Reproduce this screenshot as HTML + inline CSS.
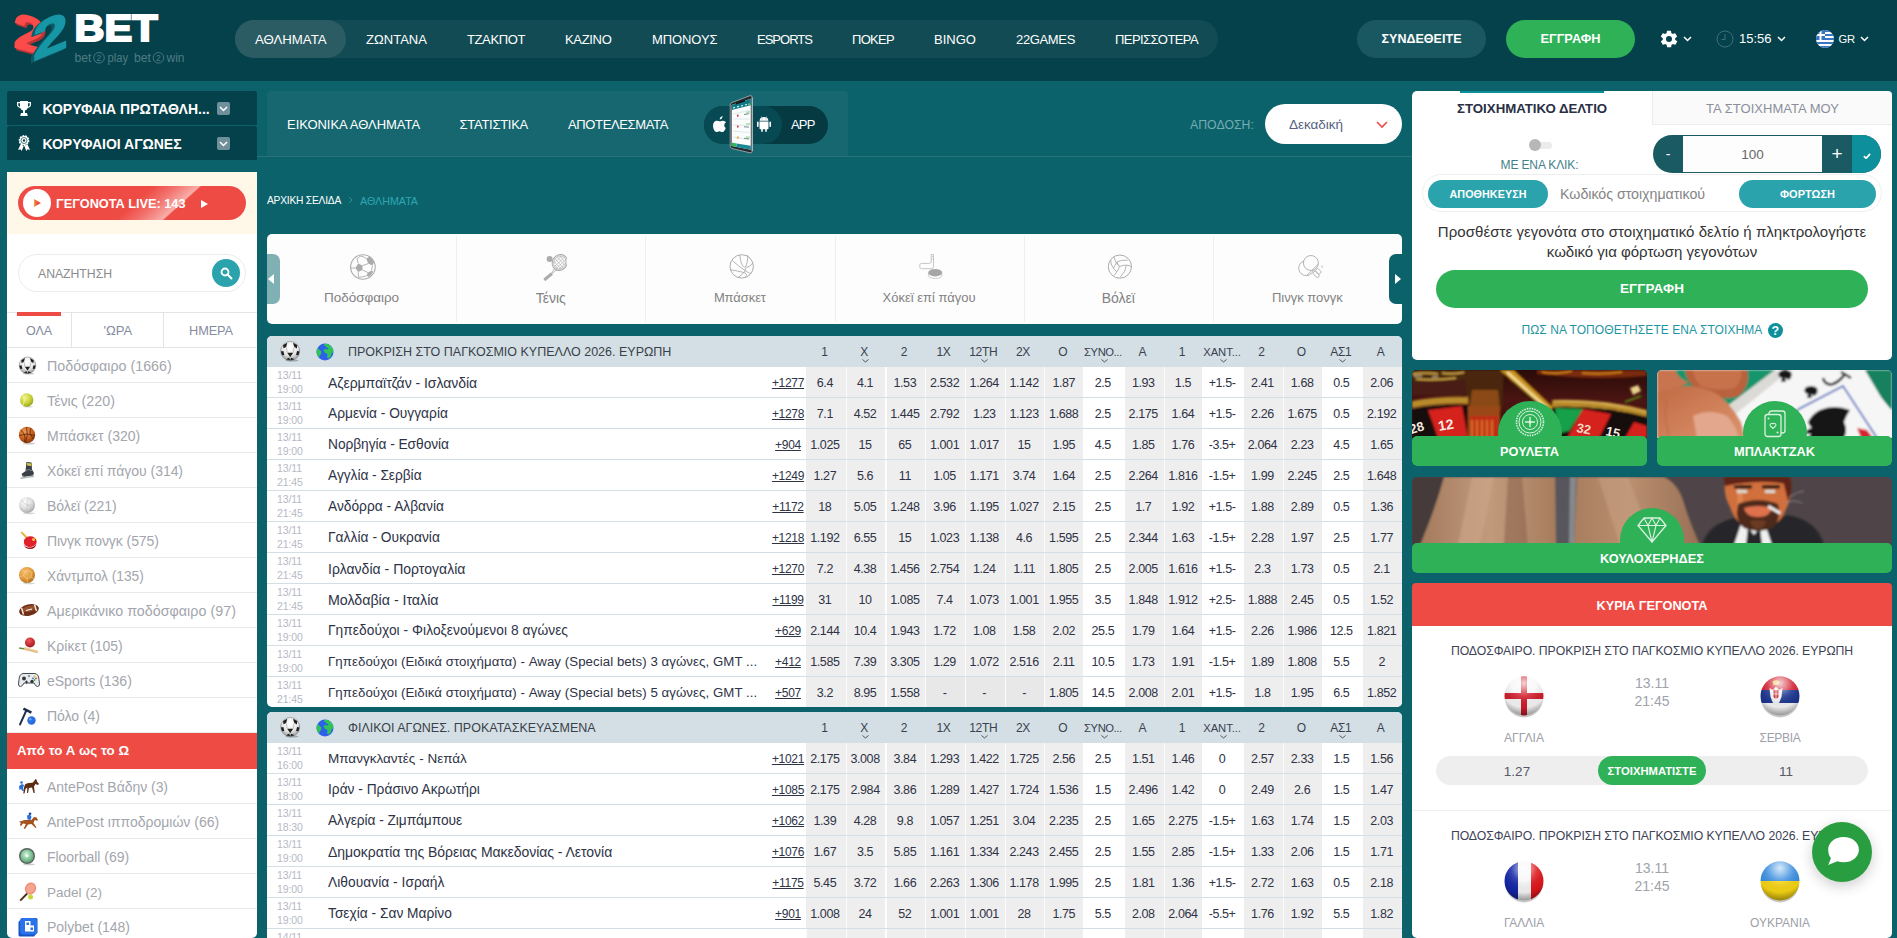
<!DOCTYPE html>
<html lang="el"><head><meta charset="utf-8"><title>22BET</title>
<style>
*{box-sizing:border-box;margin:0;padding:0}
html,body{width:1897px;height:938px;overflow:hidden}
body{background:#0b626a;position:relative;font-family:"Liberation Sans",sans-serif;color:#333;font-size:14px}
.abs{position:absolute}
svg{display:block}
/* header */
#hdr{position:absolute;left:0;top:0;width:1897px;height:81px;background:#05414b}
#nav{position:absolute;left:235px;top:20px;width:983px;height:38px;border-radius:19px;background:#124b54}
#nav .act{position:absolute;left:0;top:0;width:111px;height:38px;border-radius:19px;background:#2b5c63}
#nav span{position:absolute;top:1px;line-height:38px;color:#fff;font-size:14px;white-space:nowrap}
.hbtn{position:absolute;top:20px;width:129px;height:38px;border-radius:19px;color:#fff;font-weight:bold;font-size:13px;text-align:center;line-height:38px}
.htx{position:absolute;color:#fff;font-size:14px;line-height:20px;top:29px;white-space:nowrap}
/* left top blocks */
.ltb{position:absolute;left:7px;width:250px;height:34px;background:#05414b;color:#fff;font-weight:bold;font-size:14px;line-height:34px;white-space:nowrap}
.ltb b{position:absolute;left:35.500px;top:1px}
.ltb i{position:absolute;left:210px;top:11px;width:13px;height:13px;border-radius:2px;background:#6f909b}
/* subnav */
#subnav{position:absolute;left:267px;top:91px;width:581px;height:65px;background:#16676f;border-radius:4px 4px 0 0}
#subnav span{position:absolute;top:24px;line-height:20px;color:#fff;font-size:14px;white-space:nowrap}

#sb{position:absolute;left:7px;top:172px;width:250px;height:766px;background:#fff;overflow:hidden;border-radius:0 0 5px 5px}
.sbi{position:absolute;left:0;width:250px;height:35px;border-bottom:1px solid #eaeaea}
.sbi .ic{position:absolute;left:11px;top:8px;width:22px;height:20px}
.sbi span{position:absolute;left:40px;top:1px;line-height:35px;color:#a3a6ad;white-space:nowrap}

#car{position:absolute;left:267px;top:234px;width:1135px;height:90px;border-radius:5px;background:#fdfdfd;overflow:hidden}
.tbl{position:absolute;left:267px;width:1135px;background:#fff;border-radius:5px;overflow:hidden}
.th{position:absolute;left:0;top:0;width:1135px;height:31px;background:#d3dfe4}
.hc{position:absolute;top:1px;width:39.730px;padding-right:3px;text-align:center;line-height:30px;font-size:12px;color:#3a3f52;white-space:nowrap;letter-spacing:-0.300px}
.tr{position:absolute;left:0;width:1135px;height:31px;border-bottom:1px solid #d3dfe4}
.dt{position:absolute;left:10px;top:1px;font-size:10.500px;line-height:14px;color:#b6bac4;letter-spacing:-0.100px}
.nm{position:absolute;left:61px;top:1px;line-height:30px;color:#2e3346;white-space:nowrap}
.mr{position:absolute;left:496px;width:50px;text-align:center;top:1px;line-height:31px;font-size:12px;color:#2e3346;text-decoration:underline;letter-spacing:-0.300px}
.oc{position:absolute;top:0;width:39.730px;height:30px;background:#eeeeee;border-left:1px solid #fbfbfb;text-align:center;padding-right:2px;line-height:32px;font-size:12.500px;color:#2e3346;letter-spacing:-0.400px}
.oc.w{background:#fff;width:41.500px;border-left:0;z-index:2}
.oc.d{background:#e8e8e8}

#slip{position:absolute;left:1412px;top:91px;width:480px;height:269px;background:#fff;border-radius:5px}
.card{position:absolute;border-radius:5px;overflow:hidden}
.card .img{position:absolute;left:0;top:0;width:100%;height:68px;overflow:hidden}
.card .bar{position:absolute;left:0;bottom:0;width:100%;height:30px;background:#2eb157;border-radius:5px;text-align:center;line-height:30px;color:#fff;white-space:nowrap}
.card .bump{position:absolute;top:31px;width:64px;height:64px;border-radius:32px;background:#2eb157}
</style></head>
<body>
<div id="hdr"><svg class="abs" style="left:0;top:0" width="200" height="81" viewBox="0 0 200 81">
<g font-family="Liberation Sans, sans-serif" font-weight="bold">
<g transform="matrix(1.14 0.30 0 1 13.5 47)"><text x="0" y="0" font-size="50" fill="#b93434" stroke="#b93434" stroke-width="2" transform="translate(1.8,1.4)">2</text><text x="0" y="0" font-size="50" fill="#fb4b4b" stroke="#fb4b4b" stroke-width="1.6">2</text></g>
<g transform="matrix(1.20 -0.50 0 1 33 61)"><text x="0" y="0" font-size="52" fill="#0b5a66" stroke="#0b5a66" stroke-width="2" transform="translate(-2.4,0.8)">2</text><text x="0" y="0" font-size="52" fill="#1797a5" stroke="#1797a5" stroke-width="1.6">2</text></g>
<text x="74.500" y="40.800" font-size="36" fill="#fff" stroke="#fff" stroke-width="2" textLength="83" lengthAdjust="spacingAndGlyphs">BET</text>
</g>
<g font-family="Liberation Sans, sans-serif" font-size="12.5" fill="#4e7c83">
<text x="74.5" y="61.5" textLength="17" lengthAdjust="spacingAndGlyphs">bet</text><circle cx="99" cy="57.8" r="5.3" fill="none" stroke="#4e7c83" stroke-width="0.9"/><text x="96.6" y="61" font-size="8.5">2</text><text x="107.5" y="61.5" textLength="20.5" lengthAdjust="spacingAndGlyphs">play</text>
<text x="134" y="61.5" textLength="17" lengthAdjust="spacingAndGlyphs">bet</text><circle cx="158.5" cy="57.8" r="5.3" fill="none" stroke="#4e7c83" stroke-width="0.9"/><text x="156.1" y="61" font-size="8.5">2</text><text x="166.5" y="61.5" textLength="18" lengthAdjust="spacingAndGlyphs">win</text>
</g></svg>
<div id="nav">
<div class="act"></div><span style="left:20px;font-size:13.25px;font-weight:normal;letter-spacing:-0.05px;">ΑΘΛΗΜΑΤΑ</span><span style="left:131px;font-size:13px;font-weight:normal;letter-spacing:0.03px;">ΖΩΝΤΑΝΑ</span><span style="left:232px;font-size:13px;font-weight:normal;letter-spacing:-0.38px;">ΤΖΑΚΠΟΤ</span><span style="left:330px;font-size:13px;font-weight:normal;letter-spacing:-0.32px;">ΚΑΖΙΝΟ</span><span style="left:417px;font-size:13px;font-weight:normal;letter-spacing:-0.09px;">ΜΠΟΝΟΥΣ</span><span style="left:522px;font-size:13px;font-weight:normal;letter-spacing:-0.99px;">ESPORTS</span><span style="left:617px;font-size:13px;font-weight:normal;letter-spacing:-0.70px;">ΠΟΚΕΡ</span><span style="left:699px;font-size:13px;font-weight:normal;">BINGO</span><span style="left:781px;font-size:13px;font-weight:normal;letter-spacing:-0.35px;">22GAMES</span><span style="left:880px;font-size:13px;font-weight:normal;letter-spacing:-0.59px;">ΠΕΡΙΣΣΟΤΕΡΑ</span></div>
<div class="hbtn" style="left:1357px;background:#1a5861;font-size:12.5px;font-weight:bold;letter-spacing:0.03px;">ΣΥΝΔΕΘΕΙΤΕ</div>
<div class="hbtn" style="left:1506px;background:#2eb157;font-size:12.75px;font-weight:bold;">ΕΓΓΡΑΦΗ</div><svg class="abs" style="left:1658.5px;top:29px" width="20" height="20" viewBox="0 0 24 24"><path fill="#fff" d="M19.4 13a7.5 7.5 0 0 0 0-2l2.1-1.6a.5.5 0 0 0 .1-.7l-2-3.4a.5.5 0 0 0-.6-.2l-2.5 1a7.300 7.300 0 0 0-1.700-1l-.4-2.600A.5.5 0 0 0 14 2h-4a.5.5 0 0 0-.5.4l-.4 2.700a7.300 7.300 0 0 0-1.700 1l-2.500-1a.5.5 0 0 0-.6.2l-2 3.400a.5.5 0 0 0 .1.700L4.600 11a7.500 7.500 0 0 0 0 2l-2.100 1.600a.5.500 0 0 0-.1.700l2 3.400c.1.200.400.300.600.200l2.500-1c.500.400 1.100.700 1.700 1l.4 2.600c0 .300.200.500.500.500h4c.300 0 .500-.200.500-.400l.4-2.700c.600-.200 1.200-.600 1.700-1l2.500 1c.200.100.500 0 .600-.200l2-3.400a.500.500 0 0 0-.1-.700L19.400 13zM12 15.600a3.600 3.600 0 1 1 0-7.200 3.600 3.600 0 0 1 0 7.200z"/></svg><svg class="abs" style="left:1683px;top:36px" width="9" height="6" viewBox="0 0 9 6"><path d="M1 1l3.5 3.5L8 1" fill="none" stroke="#fff" stroke-width="1.5"/></svg><svg class="abs" style="left:1716px;top:30px" width="18" height="18" viewBox="0 0 18 18"><circle cx="9" cy="9" r="8" fill="none" stroke="#3f6f78" stroke-width="1"/><path d="M9 4v5.500h-3.500" fill="none" stroke="#3f6f78" stroke-width="1"/></svg><span class="htx" style="left:1739px;font-size:13px;font-weight:normal;">15:56</span><svg class="abs" style="left:1777px;top:36px" width="9" height="6" viewBox="0 0 9 6"><path d="M1 1l3.5 3.5L8 1" fill="none" stroke="#fff" stroke-width="1.5"/></svg><svg class="abs" style="left:1816px;top:30px" width="18" height="18" viewBox="0 0 18 18"><defs><clipPath id="cgr"><circle cx="9" cy="9" r="9"/></clipPath></defs><g clip-path="url(#cgr)"><rect width="18" height="18" fill="#fff"/><g fill="#3a75c4"><rect y="0" width="18" height="2"/><rect y="4" width="18" height="2"/><rect y="8" width="18" height="2"/><rect y="12" width="18" height="2"/><rect y="16" width="18" height="2"/><rect width="9" height="10"/></g><rect x="3.500" width="2" height="10" fill="#fff"/><rect y="4" width="9" height="2" fill="#fff"/></g></svg><span class="htx" style="left:1838.5px;font-size:11.25px;font-weight:normal;letter-spacing:-0.19px;">GR</span><svg class="abs" style="left:1860px;top:36px" width="9" height="6" viewBox="0 0 9 6"><path d="M1 1l3.5 3.5L8 1" fill="none" stroke="#fff" stroke-width="1.5"/></svg></div>
<div class="ltb" style="top:91px;border-radius:3px 3px 0 0"><svg class="abs" style="left:10px;top:10px" width="14" height="15" viewBox="0 0 14 15"><path fill="#fff" d="M3 0h8v1h3v2.500q0 3-3.300 3.400Q10 9 8 9.500V12h2l.8 3H3.200L4 12h2V9.500Q4 9 3.300 6.900Q0 6.500 0 3.500V1h3zM1.200 2.200v1.300q0 1.800 1.800 2.200V2.200zm11.600 0H11v3.500q1.800-.4 1.800-2.200z"/></svg><b style="font-size:14px;font-weight:bold;">ΚΟΡΥΦΑΙΑ ΠΡΩΤΑΘΛΗ...</b><i></i><svg class="abs" style="left:212px;top:15px" width="9" height="6" viewBox="0 0 9 6"><path d="M1 1l3.500 3.500L8 1" fill="none" stroke="#fff" stroke-width="1.500"/></svg></div>
<div class="ltb" style="top:126px;border-radius:3px 3px 0 0"><svg class="abs" style="left:10px;top:9px" width="14" height="16" viewBox="0 0 14 16"><circle cx="7" cy="5.500" r="4.600" fill="#fff" stroke="#fff" stroke-width="1.600" stroke-dasharray="1.700 1.100"/><circle cx="7" cy="5.500" r="3" fill="none" stroke="#05414b" stroke-width="0.700"/><circle cx="7" cy="5.500" r="1.200" fill="#05414b"/><path d="M3.500 9.500L1 15l2.500-.8L4.700 16l2-5zM10.500 9.500L13 15l-2.500-.8L9.300 16l-2-5z" fill="#fff"/></svg><b style="font-size:14px;font-weight:bold;letter-spacing:-0.02px;">ΚΟΡΥΦΑΙΟΙ ΑΓΩΝΕΣ</b><i></i><svg class="abs" style="left:212px;top:15px" width="9" height="6" viewBox="0 0 9 6"><path d="M1 1l3.500 3.500L8 1" fill="none" stroke="#fff" stroke-width="1.500"/></svg></div>
<div id="sb">
<div class="abs" style="left:0;top:0;width:250px;height:62px;background:#fff8e9"></div>
<div class="abs" style="left:11px;top:14px;width:228px;height:34px;border-radius:17px;background:linear-gradient(138deg,#ef4b45 0,#ef4b45 51%,#f2706b 59%,#f69a95 65.500%,#f9aeaa 68.300%,#ef4b45 69.200%,#ef4b45 100%);overflow:hidden">
<div class="abs" style="left:4.500px;top:3px;width:28px;height:28px;border-radius:14px;background:#fff"></div>
<svg class="abs" style="left:16px;top:13px" width="7" height="8" viewBox="0 0 7 8"><defs><linearGradient id="plg" x1="0" y1="0" x2="1" y2="0"><stop offset="0" stop-color="#f0a23a"/><stop offset="0.45" stop-color="#ef4b45"/></linearGradient></defs><path d="M0 0l7 4-7 4z" fill="url(#plg)"/></svg>
<span class="abs" style="left:38px;top:1px;line-height:34px;color:#fff;white-space:nowrap;font-size:12.75px;font-weight:bold;letter-spacing:-0.02px;">ΓΕΓΟΝΟΤΑ LIVE: 143</span>
<svg class="abs" style="left:183px;top:13.500px" width="7" height="8" viewBox="0 0 7 8"><path d="M0 0l7 4-7 4z" fill="#fff"/></svg></div>
<div class="abs" style="left:11px;top:82px;width:228px;height:38px;border-radius:19px;border:1px solid #ececec;background:#fff"></div>
<span class="abs" style="left:31px;top:92px;line-height:20px;color:#8b8b8b;font-size:12.25px;font-weight:normal;letter-spacing:-0.03px;">ΑΝΑΖΗΤΗΣΗ</span>
<div class="abs" style="left:205px;top:87px;width:28px;height:28px;border-radius:14px;background:#2ba3ad"></div>
<svg class="abs" style="left:213px;top:95px" width="13" height="13" viewBox="0 0 13 13"><circle cx="5" cy="5" r="3.500" fill="none" stroke="#fff" stroke-width="1.800"/><path d="M7.800 7.800l3.700 3.700" stroke="#fff" stroke-width="2" stroke-linecap="round"/></svg>
<div class="abs" style="left:0;top:140px;width:250px;height:36px;border-top:1px solid #e4e4e4;border-bottom:1px solid #e4e4e4"></div>
<div class="abs" style="left:10px;top:140px;width:44px;height:4px;background:#ef4b45"></div>
<div class="abs" style="left:64px;top:141px;width:1px;height:34px;background:#e4e4e4"></div>
<div class="abs" style="left:156px;top:141px;width:1px;height:34px;background:#e4e4e4"></div><span class="abs" style="left:19px;top:149px;line-height:20px;color:#858ca0;white-space:nowrap;font-size:12.5px;font-weight:normal;letter-spacing:-0.06px;">ΟΛΑ</span><span class="abs" style="left:96.5px;top:149px;line-height:20px;color:#858ca0;white-space:nowrap;font-size:13px;font-weight:normal;">'ΩΡΑ</span><span class="abs" style="left:182px;top:149px;line-height:20px;color:#858ca0;white-space:nowrap;font-size:12.75px;font-weight:normal;letter-spacing:-0.08px;">ΗΜΕΡΑ</span>
<div class="sbi" style="top:176px">
<div class="ic"><svg width="19" height="19" viewBox="0 0 19 19"><ellipse cx="10.500" cy="17.700" rx="6" ry="0.900" fill="#889" opacity="0.500"/><g><defs><radialGradient id="sb1" cx="48%" cy="30%" r="75%"><stop offset="0" stop-color="#fff"/><stop offset="0.55" stop-color="#e9e9e9"/><stop offset="1" stop-color="#8d8d8d"/></radialGradient></defs>
<circle cx="9.5" cy="9.3" r="8.3" fill="url(#sb1)" stroke="#6b6b6b" stroke-width="0.5"/><path d="M3.27 4.15 L7.01 2.00 L6.01 5.57 L3.69 7.23z M15.73 4.15 L11.99 2.00 L12.99 5.57 L15.31 7.23z M6.84 10.79 L12.16 10.79 L9.50 14.45z M1.37 9.71 L3.52 9.30 L4.35 12.79 L2.36 13.04z M17.63 9.71 L15.48 9.30 L14.65 12.79 L16.64 13.04z M5.76 16.60 L8.50 15.28 L9.50 17.43z M13.23 16.60 L10.50 15.28 L9.50 17.43z" fill="#1e1e1e"/>
<path d="M6.84 10.79L6.01 5.57M12.16 10.79L12.99 5.57M9.50 14.45L8.50 15.28M9.50 14.45L10.50 15.28" stroke="#777" stroke-width="0.4" fill="none"/></g></svg></div><span style="font-size:14.25px;font-weight:normal;">Ποδόσφαιρο (1666)</span></div>
<div class="sbi" style="top:211px">
<div class="ic"><svg width="18" height="18" viewBox="0 0 18 18"><defs><radialGradient id="tg" cx="38%" cy="32%" r="75%"><stop offset="0" stop-color="#f3f58a"/><stop offset="0.6" stop-color="#c3cf35"/><stop offset="1" stop-color="#8f9a1e"/></radialGradient></defs><ellipse cx="10" cy="15.800" rx="5" ry="0.800" fill="#998" opacity="0.400"/><circle cx="8.700" cy="9" r="6.700" fill="url(#tg)"/><path d="M4.500 4q3.500 4.500 0.500 10" fill="none" stroke="#f1f3b5" stroke-width="0.900"/></svg></div><span style="font-size:14.25px;font-weight:normal;">Τένις (220)</span></div>
<div class="sbi" style="top:246px">
<div class="ic"><svg width="19" height="19" viewBox="0 0 19 19"><defs><radialGradient id="bg" cx="40%" cy="30%" r="75%"><stop offset="0" stop-color="#f09a55"/><stop offset="0.6" stop-color="#c75e1c"/><stop offset="1" stop-color="#7a300a"/></radialGradient></defs><ellipse cx="11" cy="17.500" rx="6" ry="0.900" fill="#988" opacity="0.450"/><circle cx="9" cy="9" r="8.200" fill="url(#bg)"/><path d="M1 9.500q8-3 16 0M8.500 1q2 8-1 16M2.500 4q6 4 4 12M13 2q-3 6 3 11" fill="none" stroke="#4a1c06" stroke-width="0.700"/></svg></div><span style="font-size:14px;font-weight:normal;">Μπάσκετ (320)</span></div>
<div class="sbi" style="top:281px">
<div class="ic"><svg width="19" height="19" viewBox="0 0 19 19"><path d="M8.500 1l5 .5.5 7 2 3.500-1 2.500-10 1.500-1.500-3 4-3z" fill="#3a3f45"/><path d="M9 2l4 .4.200 2.600-4-.4z" fill="#d9c83a"/><path d="M7 10.500l3-2 4 1" fill="none" stroke="#8a929a" stroke-width="0.800"/><path d="M2.500 17.200l13.500-2" stroke="#aeb6bd" stroke-width="1.400"/><path d="M5.500 16v-1.500M14 14.800v-1.300" stroke="#777" stroke-width="1"/></svg></div><span style="font-size:14px;font-weight:normal;letter-spacing:-0.04px;">Χόκεϊ επί πάγου (314)</span></div>
<div class="sbi" style="top:316px">
<div class="ic"><svg width="19" height="19" viewBox="0 0 19 19"><defs><radialGradient id="vg" cx="40%" cy="32%" r="72%"><stop offset="0" stop-color="#fff"/><stop offset="0.55" stop-color="#dedede"/><stop offset="1" stop-color="#a3a3a3"/></radialGradient></defs><ellipse cx="11" cy="17.300" rx="6" ry="0.900" fill="#999" opacity="0.400"/><circle cx="9" cy="9" r="8" fill="url(#vg)"/><path d="M9 9q-1-4 2-7.500M9 9q4-1 8 1M9 9q1 4-2 7.500M3 4q3 3 6 5M15 13q-3-3-6-4" fill="none" stroke="#c4c4c4" stroke-width="0.600"/></svg></div><span style="font-size:14px;font-weight:normal;">Βόλεϊ (221)</span></div>
<div class="sbi" style="top:351px">
<div class="ic"><svg width="20" height="19" viewBox="0 0 20 19"><path d="M2.500 1.500l1.500-1 6 6-1.500 1.500z" fill="#e6b13a"/><path d="M6 9q3-5 8.500-3.500 5 2 4 6.500-2 4.500-8 4-5.500-1.500-4.500-7z" fill="#e2202a"/><path d="M6 11q-1 5 4.500 5.500 6 .500 8-4-1 6-7.500 5.500Q5 17 6 11z" fill="#9e1219"/><circle cx="15.500" cy="8.500" r="1.500" fill="#f3c53a"/></svg></div><span style="font-size:14px;font-weight:normal;letter-spacing:-0.06px;">Πινγκ πονγκ (575)</span></div>
<div class="sbi" style="top:386px">
<div class="ic"><svg width="19" height="19" viewBox="0 0 19 19"><defs><radialGradient id="hg" cx="40%" cy="32%" r="72%"><stop offset="0" stop-color="#f7c070"/><stop offset="0.6" stop-color="#e09a3a"/><stop offset="1" stop-color="#a96a18"/></radialGradient></defs><ellipse cx="11" cy="17.300" rx="6" ry="0.900" fill="#998" opacity="0.400"/><circle cx="9" cy="9" r="8" fill="url(#hg)"/><path d="M4 4l3 1.500 4-1 3 2M7 5.500l-1.500 4 3.500 3 4-1.500 1-4.500M5.500 9.500L2 11M9 12.500l.5 4M13 11l3 2" fill="none" stroke="#f3cf8f" stroke-width="0.600"/></svg></div><span style="font-size:13.75px;font-weight:normal;">Χάντμπολ (135)</span></div>
<div class="sbi" style="top:421px">
<div class="ic"><svg width="22" height="18" viewBox="0 0 22 18"><ellipse cx="11" cy="9" rx="10" ry="5.600" transform="rotate(-14 11 9)" fill="#6e2f16"/><ellipse cx="11" cy="7.800" rx="7.500" ry="2.800" transform="rotate(-14 11 7.800)" fill="#96502c"/><path d="M8 9.500l6-1.500" stroke="#fff" stroke-width="1"/><path d="M3.500 7l2 6.500M16.500 3.500l2 6.500" stroke="#efe9e4" stroke-width="1.500"/></svg></div><span style="font-size:14.25px;font-weight:normal;letter-spacing:0.04px;">Αμερικάνικο ποδόσφαιρο (97)</span></div>
<div class="sbi" style="top:456px">
<div class="ic"><svg width="22" height="18" viewBox="0 0 22 18"><defs><radialGradient id="cg" cx="40%" cy="30%" r="72%"><stop offset="0" stop-color="#f0565a"/><stop offset="1" stop-color="#a5141c"/></radialGradient></defs><circle cx="12" cy="6.500" r="5" fill="url(#cg)"/><path d="M1 11.500l5 .500 1-.800 13 3.500-.5 2.500-14-3.500-4.500-1z" fill="#e2bd86"/><path d="M1 11.500l5 .500-.500 1.200-4.500-.700z" fill="#4a8a3a"/><path d="M7 11.200l13 3.500-.2.800-13-3.500z" fill="#f0d9ae"/></svg></div><span style="font-size:14px;font-weight:normal;">Κρίκετ (105)</span></div>
<div class="sbi" style="top:491px">
<div class="ic"><svg width="22" height="18" viewBox="0 0 22 18"><path d="M5 2.500h12q3.500.500 4 6l.5 4.500q0 2.500-2 2.500-1.800 0-3.500-3.500H6Q4.300 15.500 2.500 15.500.5 15.500.5 13L1 8.500q.5-5.500 4-6z" fill="#e9ecef" stroke="#454a50" stroke-width="1"/><circle cx="6" cy="7.500" r="1.900" fill="#33373c"/><circle cx="14" cy="10.500" r="1.700" fill="#33373c"/><path d="M8.500 9.500v3M7 11h3" stroke="#33373c" stroke-width="1.100"/><circle cx="16.500" cy="5.500" r="0.900" fill="#e3b21c"/><circle cx="18" cy="7.300" r="0.900" fill="#d43a30"/><circle cx="15" cy="7.300" r="0.900" fill="#2f6fd0"/><circle cx="16.500" cy="9" r="0.900" fill="#3aa548"/><circle cx="11" cy="5" r="1.300" fill="#9aa1a8"/></svg></div><span style="font-size:14px;font-weight:normal;">eSports (136)</span></div>
<div class="sbi" style="top:526px">
<div class="ic"><svg width="20" height="20" viewBox="0 0 20 20"><path d="M2 18.500L8.500 4" stroke="#1f2e4d" stroke-width="1.900" stroke-linecap="round"/><path d="M6 1.500l8 4-1.200 2.300-8-4z" fill="#1f2e4d"/><circle cx="13.500" cy="14.500" r="4.200" fill="#2a6fe0"/><circle cx="12.300" cy="13.200" r="1.300" fill="#6fa2f2"/></svg></div><span style="font-size:14px;font-weight:normal;letter-spacing:-0.03px;">Πόλο (4)</span></div>
<div class="abs" style="left:0;top:561px;width:250px;height:36px;background:#ef4b45;color:#fff;font-weight:bold;line-height:36px;padding-left:10px;font-size:13.25px;font-weight:bold;letter-spacing:0.05px;">Από το Α ως το Ω</div>
<div class="sbi" style="top:597px">
<div class="ic"><svg width="22" height="18" viewBox="0 0 22 18"><path d="M7 7.500q2-2 5-1.500l3-.5 2.500-3.500 1 .5.500 2 2 2.500-1 1-2.500-1-1.500 2.500.8 6.500h-1.200l-1.600-5.500-3 .500-1 5H9l.3-5.500L7.500 12l-1 4.500H5.300l.7-6z" fill="#5c2d12"/><path d="M1 9l3-2 2 1-1 3 1 3H4.500L3 12l-1.500 1z" fill="#2d6fd8"/><circle cx="3.500" cy="5.500" r="1.300" fill="#2d6fd8"/></svg></div><span style="font-size:14px;font-weight:normal;letter-spacing:-0.04px;">AntePost Βάδην (3)</span></div>
<div class="sbi" style="top:632px">
<div class="ic"><svg width="22" height="18" viewBox="0 0 22 18"><path d="M3 9.500q2-2 5.500-1.500h5l2.500-3 2.500.5 1.500 2.500-.8.800-2.500-.8-1.200 3 3 4.500-1 .5-4-4-3.500.5-3 4.500-1.200-.5 2-4.500-2.800-.5-2 2.500-1-.5z" fill="#a3521c"/><path d="M9 3.500l3-1 1.500 2.500-1 3-3-.5z" fill="#2d6fd8"/><circle cx="12" cy="1.800" r="1.400" fill="#1f4fa8"/><path d="M1 10l2-1 .5 1.500z" fill="#6a3412"/></svg></div><span style="font-size:14px;font-weight:normal;">AntePost ιπποδρομιών (66)</span></div>
<div class="sbi" style="top:667px">
<div class="ic"><svg width="19" height="19" viewBox="0 0 19 19"><defs><radialGradient id="fg" cx="45%" cy="40%" r="65%"><stop offset="0" stop-color="#e5f5ea"/><stop offset="0.45" stop-color="#8fcfa4"/><stop offset="1" stop-color="#5a9a72"/></radialGradient></defs><ellipse cx="11" cy="17.300" rx="6" ry="0.900" fill="#888" opacity="0.450"/><circle cx="9" cy="9" r="8" fill="#5b625e"/><circle cx="9" cy="9" r="6.600" fill="url(#fg)"/><circle cx="9" cy="9" r="1.300" fill="#f4fbf6"/></svg></div><span style="font-size:14px;font-weight:normal;letter-spacing:-0.03px;">Floorball (69)</span></div>
<div class="sbi" style="top:702px">
<div class="ic"><svg width="20" height="20" viewBox="0 0 20 20"><ellipse cx="12.500" cy="6.500" rx="5.500" ry="6.200" transform="rotate(28 12.500 6.500)" fill="#ee8a72"/><ellipse cx="12.500" cy="6.500" rx="4.300" ry="5" transform="rotate(28 12.500 6.500)" fill="#f4a590"/><path d="M8.300 11l1.600 1.300-7 7-1.400-1.400z" fill="#4a2e1e"/><circle cx="12.500" cy="15" r="2.500" fill="#c7d43a"/></svg></div><span style="font-size:13.5px;font-weight:normal;letter-spacing:0.02px;">Padel (2)</span></div>
<div class="sbi" style="top:737px">
<div class="ic"><svg width="20" height="20" viewBox="0 0 20 20"><path d="M4 1h14q1.500 0 1.500 1.500v13l-3.500 4H2Q.500 19.500.500 18V5z" fill="#1553c4"/><rect x="2" y="1" width="17" height="16.500" rx="3" fill="#2a72ea"/><path d="M7 4h5.500v4.500H16v6H7z" fill="#fff"/><rect x="8.500" y="5.500" width="2.500" height="2.500" fill="#2a72ea"/><rect x="12.500" y="10.500" width="2.500" height="2.500" fill="#2a72ea"/></svg></div><span style="font-size:14px;font-weight:normal;letter-spacing:-0.02px;">Polybet (148)</span></div></div>
<div class="abs" style="left:257px;top:156px;width:1155px;height:1px;background:#27737b"></div>
<div id="subnav"><span style="left:20px;font-size:13px;font-weight:normal;letter-spacing:-0.04px;">ΕΙΚΟΝΙΚΑ ΑΘΛΗΜΑΤΑ</span><span style="left:192.5px;font-size:13px;font-weight:normal;letter-spacing:-0.27px;">ΣΤΑΤΙΣΤΙΚΑ</span><span style="left:301px;font-size:13px;font-weight:normal;letter-spacing:-0.36px;">ΑΠΟΤΕΛΕΣΜΑΤΑ</span>
<div class="abs" style="left:437px;top:15px;width:124px;height:38px;border-radius:19px;background:#053a43;overflow:hidden">
<div class="abs" style="left:0;top:0;width:78px;height:38px;border-radius:19px;background:#074a54"></div></div>
<svg class="abs" style="left:446px;top:24.500px" width="13.500" height="16.200" viewBox="0 0 15 18"><path fill="#fff" d="M10.500 0q.2 1.500-.8 2.700T7.500 4q-.2-1.400.8-2.600T10.500 0zM14.300 13.200q-.6 1.700-1.700 3.200-1 1.400-2.100 1.400-.8 0-1.700-.4-.9-.4-1.700-.4t-1.800.4q-.9.400-1.500.4-1.200 0-2.400-1.700Q0 14 0 10.800q0-2.500 1.300-4.100 1.300-1.500 3-1.500.9 0 2 .4 1 .4 1.400.4.300 0 1.500-.5 1.200-.4 2-.3 2.200.2 3.300 1.800-2 1.200-2 3.400 0 1.700 1.200 2.800z"/></svg>
<svg class="abs" style="left:490px;top:25px" width="14" height="16" viewBox="0 0 14 16"><path fill="#fff" d="M2.500 5.500h9v7q0 .8-.8.800h-.9v2q0 .7-.8.700t-.8-.7v-2H5.800v2q0 .7-.8.700t-.8-.7v-2h-.9q-.8 0-.8-.8zM.8 5.400q.8 0 .8.800v4q0 .8-.8.800T0 10.200v-4q0-.8.800-.8zm12.400 0q.8 0 .8.800v4q0 .8-.8.800t-.8-.8v-4q0-.8.800-.8zM2.500 4.800q.1-2.200 2-3.200L3.800.4 4.100.2l.8 1.200Q5.900 1 7 1t2.100.4L9.900.2l.3.200-.7 1.200q1.900 1 2 3.200zM5 3.400a.4.4 0 1 0 0-.900.4.4 0 0 0 0 .9zm4 0a.4.4 0 1 0 0-.900.4.4 0 0 0 0 .9z"/></svg><span style="left:524px;color:#fff;font-size:13px;font-weight:normal;letter-spacing:-0.84px;">APP</span><svg class="abs" style="left:460px;top:2px" width="28" height="62" viewBox="0 0 28 62"><path d="M5 9.500L23 2.700q2.200-.5 2.200 1.800V58q0 2.300-2.200 1.800L5 55.500q-1.800-.6-1.800-2.500V12q0-1.900 1.800-2.500z" fill="#23282e" stroke="#aeb4b8" stroke-width="0.800"/><path d="M25.200 4.500V58" stroke="#d0d4d6" stroke-width="0.900"/><path d="M4.600 12L23.800 5.800V56.800L4.600 53z" fill="#fbfcfc"/><path d="M4.600 12L23.800 5.800v6.400L4.600 17z" fill="#0e7a86"/><path d="M9 9.800l9-3v1.600l-9 3z" fill="#15191d"/><path d="M6 15l2-.6M10 14l2-.6M14 13l2-.5M18 12l2-.5" stroke="#e8f4f5" stroke-width="1.200"/><path d="M21 11.500l2-.5" stroke="#5fc86a" stroke-width="1.600"/><path d="M4.600 49.500l5 .9v3.600l-5-1z" fill="#2fb457"/><path d="M9.600 50.400l14.200 2.400v4l-14.200-2.800z" fill="#1a8894"/><path d="M6 21l16-3.500M6 26h16M6 32l16 .5M6 38l16 1.500M6 44l16 2.500" stroke="#dfe9ec" stroke-width="1"/><path d="M10 22.800l1.500-.3M10 33.500h1.500" stroke="#d4303a" stroke-width="2"/><path d="M17 21.500l5-.8M17 33.800l5 .3M17 45.200l5 .8" stroke="#7a8a8e" stroke-width="1"/><path d="M20 18.500v2M22 18v2M20 30v2M22 30v2M20 43v2M22 43.500v2" stroke="#4fc460" stroke-width="0.800"/><path d="M10 44.500l1.600.3" stroke="#f0a020" stroke-width="2"/></svg></div><span class="abs" style="left:1190px;top:115px;line-height:20px;color:#76adb3;white-space:nowrap;font-size:12.25px;font-weight:normal;letter-spacing:0.05px;">ΑΠΟΔΟΣΗ:</span>
<div class="abs" style="left:1265px;top:104px;width:137px;height:40px;border-radius:20px;background:#fff"><span class="abs" style="left:24px;top:11px;line-height:20px;color:#56617f;font-size:13.5px;font-weight:normal;letter-spacing:-0.03px;">Δεκαδική</span><svg class="abs" style="left:111px;top:17px" width="12" height="8" viewBox="0 0 12 8"><path d="M1 1l5 5 5-5" fill="none" stroke="#ef4b45" stroke-width="1.600"/></svg></div><span class="abs" style="left:267px;top:190.500px;line-height:20px;color:#fff;white-space:nowrap;font-size:10.25px;font-weight:normal;letter-spacing:-0.23px;">ΑΡΧΙΚΗ ΣΕΛΙΔΑ</span><svg class="abs" style="left:348px;top:196px" width="5" height="8" viewBox="0 0 5 8"><path d="M1 1l3 3-3 3" fill="none" stroke="#2f8f99" stroke-width="1"/></svg><span class="abs" style="left:360px;top:190.500px;line-height:20px;color:#2ea7b3;white-space:nowrap;font-size:10.75px;font-weight:normal;letter-spacing:-0.04px;">ΑΘΛΗΜΑΤΑ</span>
<div id="car">
<div class="abs" style="left:78.6px;top:19px"><svg width="32" height="28" viewBox="0 0 32 28"><g transform="translate(2.900,0)"><circle cx="14" cy="14" r="12.300" fill="none" stroke="#ababab" stroke-width="1.100"/><path d="M9.300 10.400l4.300 2.200v4.400l-4.300 2.100-2.800-4.200z" fill="#ababab"/><path d="M17.300 5.500l3.300-1.800q3.200 2 4.600 5.300l-1.700 3.500-4.200-1.900z" fill="#ababab"/><path d="M19 19.600l3.800-2.100 1.500 1.300q-1.600 3.400-4.300 4.900l-2.300-.9z" fill="#ababab"/><path d="M13.600 12.600l5.700-2M17.300 5.500q-2.500-2-5.300-2.500M9.300 10.400L8.200 5.800q1.700-1.800 3.800-2.800M13.600 17l5.400 2.600M9.300 19.100l.2 5M6.500 14.900l-4.700.3M17.700 22.800q-3.500 1.500-8.200 1.300M23.500 12.500l-.7 5" fill="none" stroke="#ababab" stroke-width="0.900"/></g></svg></div><span class="abs" style="left:0.0px;top:54px;width:189.2px;text-align:center;line-height:20px;color:#828282;font-size:13.5px;font-weight:normal;letter-spacing:-0.04px;">Ποδόσφαιρο</span>
<div class="abs" style="left:189.2px;top:2px;width:1px;height:86px;background:#efefef"></div>
<div class="abs" style="left:267.8px;top:19px"><svg width="32" height="28" viewBox="0 0 32 28"><ellipse cx="24.800" cy="9.500" rx="7.300" ry="8.300" transform="rotate(32 24.800 9.500)" fill="none" stroke="#ababab" stroke-width="1"/><ellipse cx="24.800" cy="9.500" rx="5.900" ry="6.900" transform="rotate(32 24.800 9.500)" fill="none" stroke="#ababab" stroke-width="0.700"/><path d="M20 5.500l8 9M22 3.500l8 9M24.500 2.500l6 7M19 8.500l7 7.500M19.500 12l4 4.500M19.500 13.500l9.500-9M19.200 10l8-7.500M21 15.500l10-9M23 17l8-7.500" stroke="#ababab" stroke-width="0.600"/><path d="M19.600 15.500q-1.500 1.500-2.500 4.500M21.500 17q-2 .5-4 3.500" fill="none" stroke="#ababab" stroke-width="0.800"/><path d="M17 20.500L9.300 27" stroke="#ababab" stroke-width="3" /><circle cx="14.600" cy="6" r="3" fill="#ababab"/></svg></div><span class="abs" style="left:189.2px;top:54px;width:189.2px;text-align:center;line-height:20px;color:#828282;font-size:14px;font-weight:normal;letter-spacing:-0.03px;">Τένις</span>
<div class="abs" style="left:378.3px;top:2px;width:1px;height:86px;background:#efefef"></div>
<div class="abs" style="left:456.9px;top:19px"><svg width="32" height="28" viewBox="0 0 32 28"><g transform="translate(17.700,13.400)"><circle r="11.700" fill="none" stroke="#ababab" stroke-width="1"/><path d="M-1.900-11.400Q-1 -2 1.800 0.200T5.600-5.500 5.300-10.300M4.400 1.100Q8.500 0.500 10.900-3.200M-9.200-5.600Q-3-0.200 3.200 4T9.300 6.500M-10.900 3.400Q-4 4.600 1.300 5.900T4 10.600M4.400 1.100Q3.600 5.500 0 8.400T-4 11" fill="none" stroke="#ababab" stroke-width="0.900"/></g></svg></div><span class="abs" style="left:378.3px;top:54px;width:189.2px;text-align:center;line-height:20px;color:#828282;font-size:13px;font-weight:normal;letter-spacing:-0.08px;">Μπάσκετ</span>
<div class="abs" style="left:567.5px;top:2px;width:1px;height:86px;background:#efefef"></div>
<div class="abs" style="left:646.1px;top:19px"><svg width="32" height="28" viewBox="0 0 32 28"><path d="M18.200 1.500h2.300v12.200q0 2-2 2H8.500q-1.700 0-1.700-1.700v-2q0-1.600 1.700-1.600h8.200q1.500 0 1.500-1.500z" fill="#fdfdfd" stroke="#c6c6c6" stroke-width="1"/><path d="M18.700 3.500h1.300M18.700 6h1.300" stroke="#c6c6c6" stroke-width="0.800"/><ellipse cx="22.200" cy="21.800" rx="7" ry="3.700" fill="#fdfdfd" stroke="#c6c6c6" stroke-width="0.900"/><ellipse cx="22.200" cy="19.700" rx="7" ry="3.700" fill="#a6a6a6"/></svg></div><span class="abs" style="left:567.5px;top:54px;width:189.2px;text-align:center;line-height:20px;color:#828282;font-size:13px;font-weight:normal;">Χόκεϊ επί πάγου</span>
<div class="abs" style="left:756.7px;top:2px;width:1px;height:86px;background:#efefef"></div>
<div class="abs" style="left:835.2px;top:19px"><svg width="32" height="28" viewBox="0 0 32 28"><g transform="translate(17.900,13.600)"><circle r="11.600" fill="none" stroke="#ababab" stroke-width="1"/><path d="M-0.400-0.100Q-4.500-3.500-6.100-9.700M-0.400-0.100Q-2.500-2.500-3-4.600 1-6.800 7.800-6.500M-0.400-0.100Q3.500-1.800 7.200-1.400T11.200 0.500M-0.400-0.100Q-1.500 4-5.800 8.800M-9.100-6.500Q-9.500-0.500-3 5.300M6.500-1.300Q6 5 0.200 10.700M-3-4.600Q-5-1 -6.500 1.500" fill="none" stroke="#ababab" stroke-width="0.900"/></g></svg></div><span class="abs" style="left:756.7px;top:54px;width:189.2px;text-align:center;line-height:20px;color:#828282;font-size:14px;font-weight:normal;letter-spacing:-0.04px;">Βόλεϊ</span>
<div class="abs" style="left:945.8px;top:2px;width:1px;height:86px;background:#efefef"></div>
<div class="abs" style="left:1024.4px;top:19px"><svg width="32" height="28" viewBox="0 0 32 28"><circle cx="15.200" cy="15.100" r="7.500" fill="#fdfdfd" stroke="#ababab" stroke-width="0.900"/><path d="M21.700 20.200l2.300-2.300 3.800 3.800q1 1.200-.2 2.300t-2.300.1z" fill="#fdfdfd" stroke="#ababab" stroke-width="0.900"/><path d="M26.800 15.200l2.300-2.300 3.800 3.800-2.400 2.400z" transform="translate(-2.500,2.300)" fill="#fdfdfd" stroke="#ababab" stroke-width="0.900"/><circle cx="19.900" cy="10" r="7.500" fill="#fdfdfd" stroke="#ababab" stroke-width="0.900"/><path d="M15.800 22.400L27.600 10.800" stroke="#ababab" stroke-width="0.900"/><path d="M31.100 12.300v2.500" stroke="#ababab" stroke-width="0.800"/></svg></div><span class="abs" style="left:945.8px;top:54px;width:189.2px;text-align:center;line-height:20px;color:#828282;font-size:13px;font-weight:normal;">Πινγκ πονγκ</span>
<div class="abs" style="left:0;top:20px;width:13px;height:50px;border-radius:0 7px 7px 0;background:#7fb0b4"></div><svg class="abs" style="left:1px;top:40px" width="6" height="10" viewBox="0 0 6 10"><path d="M6 0v10L0 5z" fill="#fff"/></svg>
<div class="abs" style="left:1122px;top:20px;width:13px;height:50px;border-radius:7px 0 0 7px;background:#0b626a"></div><svg class="abs" style="left:1128px;top:40px" width="6" height="10" viewBox="0 0 6 10"><path d="M0 0v10l6-5z" fill="#fff"/></svg></div>
<div class="tbl" style="top:336px;height:371px">
<div class="th">
<div class="abs" style="left:13px;top:5px"><svg width="21" height="21" viewBox="0 0 21 21"><ellipse cx="12" cy="19.500" rx="6.500" ry="1" fill="#778" opacity="0.550"/><g><defs><radialGradient id="tb1" cx="48%" cy="30%" r="75%"><stop offset="0" stop-color="#fff"/><stop offset="0.55" stop-color="#e9e9e9"/><stop offset="1" stop-color="#8d8d8d"/></radialGradient></defs>
<circle cx="10.2" cy="10" r="9.5" fill="url(#tb1)" stroke="#6b6b6b" stroke-width="0.5"/><path d="M3.07 4.11 L7.35 1.64 L6.21 5.72 L3.55 7.62z M17.32 4.11 L13.05 1.64 L14.19 5.72 L16.85 7.62z M7.16 11.71 L13.24 11.71 L10.20 15.89z M0.89 10.47 L3.36 10.00 L4.31 13.99 L2.03 14.28z M19.51 10.47 L17.04 10.00 L16.09 13.99 L18.37 14.28z M5.92 18.36 L9.06 16.84 L10.20 19.31z M14.47 18.36 L11.34 16.84 L10.20 19.31z" fill="#1e1e1e"/>
<path d="M7.16 11.71L6.21 5.72M13.24 11.71L14.19 5.72M10.20 15.89L9.06 16.84M10.20 15.89L11.34 16.84" stroke="#777" stroke-width="0.4" fill="none"/></g></svg></div>
<div class="abs" style="left:49px;top:7px"><svg width="18" height="18" viewBox="0 0 18 18"><defs><clipPath id="tb1g"><circle cx="9" cy="9" r="8.500"/></clipPath></defs><circle cx="9" cy="9" r="8.500" fill="#2f60ea"/><g clip-path="url(#tb1g)" fill="#2fc457"><path d="M8.500 0.500l3 .3 3.500 1.700 2.500 4-.5 3-1.500 1-1 3.500-2 1.500-1.500-1 .5-3-1.500-1.500-1.500-.5-1-2.500 1.500-1 2.500.500 1-1.500-2-.500-1-1.500-1.500-.500z"/><path d="M0 5l2.500.500 1.500 2 1.500 1-.5 2.500-1.500 2-.500 2-1.500-1.500-1-3-1-2z"/></g></svg></div><span class="abs" style="left:81px;top:1px;line-height:30px;color:#3a3f4a;white-space:nowrap;font-size:12.5px;font-weight:normal;">ΠΡΟΚΡΙΣΗ ΣΤΟ ΠΑΓΚΟΣΜΙΟ ΚΥΠΕΛΛΟ 2026. ΕΥΡΩΠΗ</span><span class="hc" style="left:539.0px;">1</span><span class="hc" style="left:578.7px;">X</span><svg class="abs" style="left:595.1px;top:22.500px" width="7" height="4" viewBox="0 0 7 4"><path d="M0.500 0.500l3 2.500 3-2.500" fill="none" stroke="#555" stroke-width="1"/></svg><span class="hc" style="left:618.5px;">2</span><span class="hc" style="left:658.2px;">1X</span><span class="hc" style="left:697.9px;">12ΤΗ</span><svg class="abs" style="left:714.3px;top:22.500px" width="7" height="4" viewBox="0 0 7 4"><path d="M0.500 0.500l3 2.500 3-2.500" fill="none" stroke="#555" stroke-width="1"/></svg><span class="hc" style="left:737.7px;">2X</span><span class="hc" style="left:777.4px;">Ο</span><span class="hc" style="left:817.1px;font-size:11.25px;font-weight:normal;letter-spacing:-0.46px;">ΣΥΝΟ...</span><svg class="abs" style="left:833.5px;top:22.500px" width="7" height="4" viewBox="0 0 7 4"><path d="M0.500 0.500l3 2.500 3-2.500" fill="none" stroke="#555" stroke-width="1"/></svg><span class="hc" style="left:856.9px;">Α</span><span class="hc" style="left:896.6px;">1</span><span class="hc" style="left:936.3px;font-size:11.25px;font-weight:normal;letter-spacing:-0.09px;">ΧΑΝΤ...</span><svg class="abs" style="left:952.7px;top:22.500px" width="7" height="4" viewBox="0 0 7 4"><path d="M0.500 0.500l3 2.500 3-2.500" fill="none" stroke="#555" stroke-width="1"/></svg><span class="hc" style="left:976.1px;">2</span><span class="hc" style="left:1015.8px;">Ο</span><span class="hc" style="left:1055.5px;">ΑΣ1</span><svg class="abs" style="left:1071.9px;top:22.500px" width="7" height="4" viewBox="0 0 7 4"><path d="M0.500 0.500l3 2.500 3-2.500" fill="none" stroke="#555" stroke-width="1"/></svg><span class="hc" style="left:1095.3px;">Α</span></div>
<div class="tr" style="top:31px"><span class="dt">13/11<br>19:00</span><span class="nm" style="font-size:14px;font-weight:normal;letter-spacing:-0.04px;">Αζερμπαϊτζάν - Ισλανδία</span><span class="mr">+1277</span><span class="oc" style="left:539.0px;border-left:0">6.4</span><span class="oc" style="left:578.7px">4.1</span><span class="oc" style="left:618.5px">1.53</span><span class="oc" style="left:658.2px">2.532</span><span class="oc" style="left:697.9px">1.264</span><span class="oc" style="left:737.7px">1.142</span><span class="oc" style="left:777.4px">1.87</span><span class="oc w" style="left:816.1px">2.5</span><span class="oc" style="left:856.9px">1.93</span><span class="oc" style="left:896.6px">1.5</span><span class="oc w" style="left:935.3px">+1.5-</span><span class="oc" style="left:976.1px">2.41</span><span class="oc" style="left:1015.8px">1.68</span><span class="oc w" style="left:1054.5px">0.5</span><span class="oc" style="left:1095.3px">2.06</span></div>
<div class="tr" style="top:62px"><span class="dt">13/11<br>19:00</span><span class="nm" style="font-size:13.75px;font-weight:normal;">Αρμενία - Ουγγαρία</span><span class="mr">+1278</span><span class="oc" style="left:539.0px;border-left:0">7.1</span><span class="oc" style="left:578.7px">4.52</span><span class="oc" style="left:618.5px">1.445</span><span class="oc" style="left:658.2px">2.792</span><span class="oc" style="left:697.9px">1.23</span><span class="oc" style="left:737.7px">1.123</span><span class="oc" style="left:777.4px">1.688</span><span class="oc w" style="left:816.1px">2.5</span><span class="oc" style="left:856.9px">2.175</span><span class="oc" style="left:896.6px">1.64</span><span class="oc w" style="left:935.3px">+1.5-</span><span class="oc" style="left:976.1px">2.26</span><span class="oc" style="left:1015.8px">1.675</span><span class="oc w" style="left:1054.5px">0.5</span><span class="oc" style="left:1095.3px">2.192</span></div>
<div class="tr" style="top:93px"><span class="dt">13/11<br>19:00</span><span class="nm" style="font-size:13.75px;font-weight:normal;letter-spacing:-0.05px;">Νορβηγία - Εσθονία</span><span class="mr">+904</span><span class="oc" style="left:539.0px;border-left:0">1.025</span><span class="oc" style="left:578.7px">15</span><span class="oc" style="left:618.5px">65</span><span class="oc" style="left:658.2px">1.001</span><span class="oc" style="left:697.9px">1.017</span><span class="oc" style="left:737.7px">15</span><span class="oc" style="left:777.4px">1.95</span><span class="oc w" style="left:816.1px">4.5</span><span class="oc" style="left:856.9px">1.85</span><span class="oc" style="left:896.6px">1.76</span><span class="oc w" style="left:935.3px">-3.5+</span><span class="oc" style="left:976.1px">2.064</span><span class="oc" style="left:1015.8px">2.23</span><span class="oc w" style="left:1054.5px">4.5</span><span class="oc" style="left:1095.3px">1.65</span></div>
<div class="tr" style="top:124px"><span class="dt">13/11<br>21:45</span><span class="nm" style="font-size:13.75px;font-weight:normal;letter-spacing:-0.04px;">Αγγλία - Σερβία</span><span class="mr">+1249</span><span class="oc" style="left:539.0px;border-left:0">1.27</span><span class="oc" style="left:578.7px">5.6</span><span class="oc" style="left:618.5px">11</span><span class="oc" style="left:658.2px">1.05</span><span class="oc" style="left:697.9px">1.171</span><span class="oc" style="left:737.7px">3.74</span><span class="oc" style="left:777.4px">1.64</span><span class="oc w" style="left:816.1px">2.5</span><span class="oc" style="left:856.9px">2.264</span><span class="oc" style="left:896.6px">1.816</span><span class="oc w" style="left:935.3px">-1.5+</span><span class="oc" style="left:976.1px">1.99</span><span class="oc" style="left:1015.8px">2.245</span><span class="oc w" style="left:1054.5px">2.5</span><span class="oc" style="left:1095.3px">1.648</span></div>
<div class="tr" style="top:155px"><span class="dt">13/11<br>21:45</span><span class="nm" style="font-size:13.75px;font-weight:normal;">Ανδόρρα - Αλβανία</span><span class="mr">+1172</span><span class="oc" style="left:539.0px;border-left:0">18</span><span class="oc" style="left:578.7px">5.05</span><span class="oc" style="left:618.5px">1.248</span><span class="oc" style="left:658.2px">3.96</span><span class="oc" style="left:697.9px">1.195</span><span class="oc" style="left:737.7px">1.027</span><span class="oc" style="left:777.4px">2.15</span><span class="oc w" style="left:816.1px">2.5</span><span class="oc" style="left:856.9px">1.7</span><span class="oc" style="left:896.6px">1.92</span><span class="oc w" style="left:935.3px">+1.5-</span><span class="oc" style="left:976.1px">1.88</span><span class="oc" style="left:1015.8px">2.89</span><span class="oc w" style="left:1054.5px">0.5</span><span class="oc" style="left:1095.3px">1.36</span></div>
<div class="tr" style="top:186px"><span class="dt">13/11<br>21:45</span><span class="nm" style="font-size:13.75px;font-weight:normal;letter-spacing:0.04px;">Γαλλία - Ουκρανία</span><span class="mr">+1218</span><span class="oc" style="left:539.0px;border-left:0">1.192</span><span class="oc" style="left:578.7px">6.55</span><span class="oc" style="left:618.5px">15</span><span class="oc" style="left:658.2px">1.023</span><span class="oc" style="left:697.9px">1.138</span><span class="oc" style="left:737.7px">4.6</span><span class="oc" style="left:777.4px">1.595</span><span class="oc w" style="left:816.1px">2.5</span><span class="oc" style="left:856.9px">2.344</span><span class="oc" style="left:896.6px">1.63</span><span class="oc w" style="left:935.3px">-1.5+</span><span class="oc" style="left:976.1px">2.28</span><span class="oc" style="left:1015.8px">1.97</span><span class="oc w" style="left:1054.5px">2.5</span><span class="oc" style="left:1095.3px">1.77</span></div>
<div class="tr" style="top:217px"><span class="dt">13/11<br>21:45</span><span class="nm" style="font-size:14px;font-weight:normal;letter-spacing:0.02px;">Ιρλανδία - Πορτογαλία</span><span class="mr">+1270</span><span class="oc" style="left:539.0px;border-left:0">7.2</span><span class="oc" style="left:578.7px">4.38</span><span class="oc" style="left:618.5px">1.456</span><span class="oc" style="left:658.2px">2.754</span><span class="oc" style="left:697.9px">1.24</span><span class="oc" style="left:737.7px">1.11</span><span class="oc" style="left:777.4px">1.805</span><span class="oc w" style="left:816.1px">2.5</span><span class="oc" style="left:856.9px">2.005</span><span class="oc" style="left:896.6px">1.616</span><span class="oc w" style="left:935.3px">+1.5-</span><span class="oc" style="left:976.1px">2.3</span><span class="oc" style="left:1015.8px">1.73</span><span class="oc w" style="left:1054.5px">0.5</span><span class="oc" style="left:1095.3px">2.1</span></div>
<div class="tr" style="top:248px"><span class="dt">13/11<br>21:45</span><span class="nm" style="font-size:14.25px;font-weight:normal;letter-spacing:-0.03px;">Μολδαβία - Ιταλία</span><span class="mr">+1199</span><span class="oc" style="left:539.0px;border-left:0">31</span><span class="oc" style="left:578.7px">10</span><span class="oc" style="left:618.5px">1.085</span><span class="oc" style="left:658.2px">7.4</span><span class="oc" style="left:697.9px">1.073</span><span class="oc" style="left:737.7px">1.001</span><span class="oc" style="left:777.4px">1.955</span><span class="oc w" style="left:816.1px">3.5</span><span class="oc" style="left:856.9px">1.848</span><span class="oc" style="left:896.6px">1.912</span><span class="oc w" style="left:935.3px">+2.5-</span><span class="oc" style="left:976.1px">1.888</span><span class="oc" style="left:1015.8px">2.45</span><span class="oc w" style="left:1054.5px">0.5</span><span class="oc" style="left:1095.3px">1.52</span></div>
<div class="tr" style="top:279px"><span class="dt">13/11<br>19:00</span><span class="nm" style="font-size:13.75px;font-weight:normal;letter-spacing:0.05px;">Γηπεδούχοι - Φιλοξενούμενοι 8 αγώνες</span><span class="mr">+629</span><span class="oc" style="left:539.0px;border-left:0">2.144</span><span class="oc" style="left:578.7px">10.4</span><span class="oc" style="left:618.5px">1.943</span><span class="oc" style="left:658.2px">1.72</span><span class="oc" style="left:697.9px">1.08</span><span class="oc" style="left:737.7px">1.58</span><span class="oc" style="left:777.4px">2.02</span><span class="oc w" style="left:816.1px">25.5</span><span class="oc" style="left:856.9px">1.79</span><span class="oc" style="left:896.6px">1.64</span><span class="oc w" style="left:935.3px">+1.5-</span><span class="oc" style="left:976.1px">2.26</span><span class="oc" style="left:1015.8px">1.986</span><span class="oc w" style="left:1054.5px">12.5</span><span class="oc" style="left:1095.3px">1.821</span></div>
<div class="tr" style="top:310px"><span class="dt">13/11<br>19:00</span><span class="nm" style="font-size:13.25px;font-weight:normal;letter-spacing:0.06px;">Γηπεδούχοι (Ειδικά στοιχήματα) - Away (Special bets) 3 αγώνες, GMT ...</span><span class="mr">+412</span><span class="oc" style="left:539.0px;border-left:0">1.585</span><span class="oc" style="left:578.7px">7.39</span><span class="oc" style="left:618.5px">3.305</span><span class="oc" style="left:658.2px">1.29</span><span class="oc" style="left:697.9px">1.072</span><span class="oc" style="left:737.7px">2.516</span><span class="oc" style="left:777.4px">2.11</span><span class="oc w" style="left:816.1px">10.5</span><span class="oc" style="left:856.9px">1.73</span><span class="oc" style="left:896.6px">1.91</span><span class="oc w" style="left:935.3px">-1.5+</span><span class="oc" style="left:976.1px">1.89</span><span class="oc" style="left:1015.8px">1.808</span><span class="oc w" style="left:1054.5px">5.5</span><span class="oc" style="left:1095.3px">2</span></div>
<div class="tr" style="top:341px"><span class="dt">13/11<br>21:45</span><span class="nm" style="font-size:13.25px;font-weight:normal;letter-spacing:0.06px;">Γηπεδούχοι (Ειδικά στοιχήματα) - Away (Special bets) 5 αγώνες, GMT ...</span><span class="mr">+507</span><span class="oc" style="left:539.0px;border-left:0">3.2</span><span class="oc" style="left:578.7px">8.95</span><span class="oc" style="left:618.5px">1.558</span><span class="oc d" style="left:658.2px">-</span><span class="oc d" style="left:697.9px">-</span><span class="oc d" style="left:737.7px">-</span><span class="oc" style="left:777.4px">1.805</span><span class="oc w" style="left:816.1px">14.5</span><span class="oc" style="left:856.9px">2.008</span><span class="oc" style="left:896.6px">2.01</span><span class="oc w" style="left:935.3px">+1.5-</span><span class="oc" style="left:976.1px">1.8</span><span class="oc" style="left:1015.8px">1.95</span><span class="oc w" style="left:1054.5px">6.5</span><span class="oc" style="left:1095.3px">1.852</span></div></div>
<div class="tbl" style="top:712px;height:247px">
<div class="th">
<div class="abs" style="left:13px;top:5px"><svg width="21" height="21" viewBox="0 0 21 21"><ellipse cx="12" cy="19.500" rx="6.500" ry="1" fill="#778" opacity="0.550"/><g><defs><radialGradient id="tb2" cx="48%" cy="30%" r="75%"><stop offset="0" stop-color="#fff"/><stop offset="0.55" stop-color="#e9e9e9"/><stop offset="1" stop-color="#8d8d8d"/></radialGradient></defs>
<circle cx="10.2" cy="10" r="9.5" fill="url(#tb2)" stroke="#6b6b6b" stroke-width="0.5"/><path d="M3.07 4.11 L7.35 1.64 L6.21 5.72 L3.55 7.62z M17.32 4.11 L13.05 1.64 L14.19 5.72 L16.85 7.62z M7.16 11.71 L13.24 11.71 L10.20 15.89z M0.89 10.47 L3.36 10.00 L4.31 13.99 L2.03 14.28z M19.51 10.47 L17.04 10.00 L16.09 13.99 L18.37 14.28z M5.92 18.36 L9.06 16.84 L10.20 19.31z M14.47 18.36 L11.34 16.84 L10.20 19.31z" fill="#1e1e1e"/>
<path d="M7.16 11.71L6.21 5.72M13.24 11.71L14.19 5.72M10.20 15.89L9.06 16.84M10.20 15.89L11.34 16.84" stroke="#777" stroke-width="0.4" fill="none"/></g></svg></div>
<div class="abs" style="left:49px;top:7px"><svg width="18" height="18" viewBox="0 0 18 18"><defs><clipPath id="tb2g"><circle cx="9" cy="9" r="8.500"/></clipPath></defs><circle cx="9" cy="9" r="8.500" fill="#2f60ea"/><g clip-path="url(#tb2g)" fill="#2fc457"><path d="M8.500 0.500l3 .3 3.500 1.700 2.500 4-.5 3-1.500 1-1 3.500-2 1.500-1.500-1 .5-3-1.500-1.500-1.500-.5-1-2.500 1.500-1 2.500.500 1-1.500-2-.500-1-1.500-1.500-.500z"/><path d="M0 5l2.500.500 1.500 2 1.500 1-.5 2.500-1.500 2-.500 2-1.500-1.500-1-3-1-2z"/></g></svg></div><span class="abs" style="left:81px;top:1px;line-height:30px;color:#3a3f4a;white-space:nowrap;font-size:12.5px;font-weight:normal;">ΦΙΛΙΚΟΙ ΑΓΩΝΕΣ. ΠΡΟΚΑΤΑΣΚΕΥΑΣΜΕΝΑ</span><span class="hc" style="left:539.0px;">1</span><span class="hc" style="left:578.7px;">X</span><svg class="abs" style="left:595.1px;top:22.500px" width="7" height="4" viewBox="0 0 7 4"><path d="M0.500 0.500l3 2.500 3-2.500" fill="none" stroke="#555" stroke-width="1"/></svg><span class="hc" style="left:618.5px;">2</span><span class="hc" style="left:658.2px;">1X</span><span class="hc" style="left:697.9px;">12ΤΗ</span><svg class="abs" style="left:714.3px;top:22.500px" width="7" height="4" viewBox="0 0 7 4"><path d="M0.500 0.500l3 2.500 3-2.500" fill="none" stroke="#555" stroke-width="1"/></svg><span class="hc" style="left:737.7px;">2X</span><span class="hc" style="left:777.4px;">Ο</span><span class="hc" style="left:817.1px;font-size:11.25px;font-weight:normal;letter-spacing:-0.46px;">ΣΥΝΟ...</span><svg class="abs" style="left:833.5px;top:22.500px" width="7" height="4" viewBox="0 0 7 4"><path d="M0.500 0.500l3 2.500 3-2.500" fill="none" stroke="#555" stroke-width="1"/></svg><span class="hc" style="left:856.9px;">Α</span><span class="hc" style="left:896.6px;">1</span><span class="hc" style="left:936.3px;font-size:11.25px;font-weight:normal;letter-spacing:-0.09px;">ΧΑΝΤ...</span><svg class="abs" style="left:952.7px;top:22.500px" width="7" height="4" viewBox="0 0 7 4"><path d="M0.500 0.500l3 2.500 3-2.500" fill="none" stroke="#555" stroke-width="1"/></svg><span class="hc" style="left:976.1px;">2</span><span class="hc" style="left:1015.8px;">Ο</span><span class="hc" style="left:1055.5px;">ΑΣ1</span><svg class="abs" style="left:1071.9px;top:22.500px" width="7" height="4" viewBox="0 0 7 4"><path d="M0.500 0.500l3 2.500 3-2.500" fill="none" stroke="#555" stroke-width="1"/></svg><span class="hc" style="left:1095.3px;">Α</span></div>
<div class="tr" style="top:31px"><span class="dt">13/11<br>16:00</span><span class="nm" style="font-size:13.5px;font-weight:normal;">Μπανγκλαντές - Νεπάλ</span><span class="mr">+1021</span><span class="oc" style="left:539.0px;border-left:0">2.175</span><span class="oc" style="left:578.7px">3.008</span><span class="oc" style="left:618.5px">3.84</span><span class="oc" style="left:658.2px">1.293</span><span class="oc" style="left:697.9px">1.422</span><span class="oc" style="left:737.7px">1.725</span><span class="oc" style="left:777.4px">2.56</span><span class="oc w" style="left:816.1px">2.5</span><span class="oc" style="left:856.9px">1.51</span><span class="oc" style="left:896.6px">1.46</span><span class="oc w" style="left:935.3px">0</span><span class="oc" style="left:976.1px">2.57</span><span class="oc" style="left:1015.8px">2.33</span><span class="oc w" style="left:1054.5px">1.5</span><span class="oc" style="left:1095.3px">1.56</span></div>
<div class="tr" style="top:62px"><span class="dt">13/11<br>18:00</span><span class="nm" style="font-size:13.75px;font-weight:normal;">Ιράν - Πράσινο Ακρωτήρι</span><span class="mr">+1085</span><span class="oc" style="left:539.0px;border-left:0">2.175</span><span class="oc" style="left:578.7px">2.984</span><span class="oc" style="left:618.5px">3.86</span><span class="oc" style="left:658.2px">1.289</span><span class="oc" style="left:697.9px">1.427</span><span class="oc" style="left:737.7px">1.724</span><span class="oc" style="left:777.4px">1.536</span><span class="oc w" style="left:816.1px">1.5</span><span class="oc" style="left:856.9px">2.496</span><span class="oc" style="left:896.6px">1.42</span><span class="oc w" style="left:935.3px">0</span><span class="oc" style="left:976.1px">2.49</span><span class="oc" style="left:1015.8px">2.6</span><span class="oc w" style="left:1054.5px">1.5</span><span class="oc" style="left:1095.3px">1.47</span></div>
<div class="tr" style="top:93px"><span class="dt">13/11<br>18:30</span><span class="nm" style="font-size:13.75px;font-weight:normal;letter-spacing:-0.06px;">Αλγερία - Ζιμπάμπουε</span><span class="mr">+1062</span><span class="oc" style="left:539.0px;border-left:0">1.39</span><span class="oc" style="left:578.7px">4.28</span><span class="oc" style="left:618.5px">9.8</span><span class="oc" style="left:658.2px">1.057</span><span class="oc" style="left:697.9px">1.251</span><span class="oc" style="left:737.7px">3.04</span><span class="oc" style="left:777.4px">2.235</span><span class="oc w" style="left:816.1px">2.5</span><span class="oc" style="left:856.9px">1.65</span><span class="oc" style="left:896.6px">2.275</span><span class="oc w" style="left:935.3px">-1.5+</span><span class="oc" style="left:976.1px">1.63</span><span class="oc" style="left:1015.8px">1.74</span><span class="oc w" style="left:1054.5px">1.5</span><span class="oc" style="left:1095.3px">2.03</span></div>
<div class="tr" style="top:124px"><span class="dt">13/11<br>19:00</span><span class="nm" style="font-size:14px;font-weight:normal;letter-spacing:-0.04px;">Δημοκρατία της Βόρειας Μακεδονίας - Λετονία</span><span class="mr">+1076</span><span class="oc" style="left:539.0px;border-left:0">1.67</span><span class="oc" style="left:578.7px">3.5</span><span class="oc" style="left:618.5px">5.85</span><span class="oc" style="left:658.2px">1.161</span><span class="oc" style="left:697.9px">1.334</span><span class="oc" style="left:737.7px">2.243</span><span class="oc" style="left:777.4px">2.455</span><span class="oc w" style="left:816.1px">2.5</span><span class="oc" style="left:856.9px">1.55</span><span class="oc" style="left:896.6px">2.85</span><span class="oc w" style="left:935.3px">-1.5+</span><span class="oc" style="left:976.1px">1.33</span><span class="oc" style="left:1015.8px">2.06</span><span class="oc w" style="left:1054.5px">1.5</span><span class="oc" style="left:1095.3px">1.71</span></div>
<div class="tr" style="top:155px"><span class="dt">13/11<br>19:00</span><span class="nm" style="font-size:13.75px;font-weight:normal;letter-spacing:0.04px;">Λιθουανία - Ισραήλ</span><span class="mr">+1175</span><span class="oc" style="left:539.0px;border-left:0">5.45</span><span class="oc" style="left:578.7px">3.72</span><span class="oc" style="left:618.5px">1.66</span><span class="oc" style="left:658.2px">2.263</span><span class="oc" style="left:697.9px">1.306</span><span class="oc" style="left:737.7px">1.178</span><span class="oc" style="left:777.4px">1.995</span><span class="oc w" style="left:816.1px">2.5</span><span class="oc" style="left:856.9px">1.81</span><span class="oc" style="left:896.6px">1.36</span><span class="oc w" style="left:935.3px">+1.5-</span><span class="oc" style="left:976.1px">2.72</span><span class="oc" style="left:1015.8px">1.63</span><span class="oc w" style="left:1054.5px">0.5</span><span class="oc" style="left:1095.3px">2.18</span></div>
<div class="tr" style="top:186px"><span class="dt">13/11<br>19:00</span><span class="nm" style="font-size:13.75px;font-weight:normal;">Τσεχία - Σαν Μαρίνο</span><span class="mr">+901</span><span class="oc" style="left:539.0px;border-left:0">1.008</span><span class="oc" style="left:578.7px">24</span><span class="oc" style="left:618.5px">52</span><span class="oc" style="left:658.2px">1.001</span><span class="oc" style="left:697.9px">1.001</span><span class="oc" style="left:737.7px">28</span><span class="oc" style="left:777.4px">1.75</span><span class="oc w" style="left:816.1px">5.5</span><span class="oc" style="left:856.9px">2.08</span><span class="oc" style="left:896.6px">2.064</span><span class="oc w" style="left:935.3px">-5.5+</span><span class="oc" style="left:976.1px">1.76</span><span class="oc" style="left:1015.8px">1.92</span><span class="oc w" style="left:1054.5px">5.5</span><span class="oc" style="left:1095.3px">1.82</span></div>
<div class="tr" style="top:217px"><span class="dt">14/11<br></span><span class="oc" style="left:539.0px"></span><span class="oc" style="left:578.7px"></span><span class="oc" style="left:618.5px"></span><span class="oc" style="left:658.2px"></span><span class="oc" style="left:697.9px"></span><span class="oc" style="left:737.7px"></span><span class="oc" style="left:777.4px"></span><span class="oc w" style="left:816.1px"></span><span class="oc" style="left:856.9px"></span><span class="oc" style="left:896.6px"></span><span class="oc w" style="left:935.3px"></span><span class="oc" style="left:976.1px"></span><span class="oc" style="left:1015.8px"></span><span class="oc w" style="left:1054.5px"></span><span class="oc" style="left:1095.3px"></span></div></div>
<div id="slip">
<div class="abs" style="left:48px;top:0;width:144px;height:2px;background:#0e8f9c"></div>
<div class="abs" style="left:240px;top:0;width:240px;height:34px;background:#fafafa;border-left:1px solid #ececec;border-bottom:1px solid #ececec;border-radius:0 4px 0 0"></div><span class="abs" style="left:45px;top:8px;line-height:20px;color:#2a2f45;white-space:nowrap;font-size:13.25px;font-weight:bold;">ΣΤΟΙΧΗΜΑΤΙΚΟ ΔΕΛΤΙΟ</span><span class="abs" style="left:294px;top:8px;line-height:20px;color:#8a8f9c;white-space:nowrap;font-size:13px;font-weight:normal;letter-spacing:0.04px;">ΤΑ ΣΤΟΙΧΗΜΑΤΑ ΜΟΥ</span>
<div class="abs" style="left:122px;top:51px;width:18px;height:7px;border-radius:3.500px;background:#ebebeb"></div>
<div class="abs" style="left:117px;top:48px;width:12px;height:12px;border-radius:6px;background:#b5b7b9"></div><span class="abs" style="left:88.500px;top:64px;line-height:20px;color:#3f828a;white-space:nowrap;font-size:12px;font-weight:normal;letter-spacing:-0.12px;">ΜΕ ΕΝΑ ΚΛΙΚ:</span>
<div class="abs" style="left:241px;top:44px;width:228px;height:38px;border-radius:19px;background:#1a5a62;overflow:hidden">
<div class="abs" style="left:30px;top:1px;width:139px;height:36px;background:#fdfdfd"></div>
<div class="abs" style="left:199px;top:0;width:29px;height:38px;background:#0e8f9c"></div><span class="abs" style="left:0;top:0;width:30px;text-align:center;line-height:38px;color:#fff;font-size:14px">-</span><span class="abs" style="left:30px;top:0;width:139px;text-align:center;line-height:39px;color:#686868;font-size:13.500px">100</span><span class="abs" style="left:169px;top:0;width:30px;text-align:center;line-height:38px;color:#fff;font-size:19px">+</span><svg class="abs" style="left:210px;top:17.500px" width="8" height="6.200" viewBox="0 0 9 7"><path d="M1 3.500l2.500 2.500 4.500-5" fill="none" stroke="#fff" stroke-width="2"/></svg></div>
<div class="abs" style="left:10px;top:83px;width:460px;height:38px;border-radius:19px;border:1px solid #efefef"></div>
<div class="abs" style="left:16px;top:89px;width:120px;height:28px;border-radius:14px;background:#2ba3ad;color:#fff;text-align:center;line-height:28px;font-size:10.75px;font-weight:bold;letter-spacing:0.07px;">ΑΠΟΘΗΚΕΥΣΗ</div><span class="abs" style="left:148px;top:93px;line-height:20px;color:#858585;white-space:nowrap;font-size:14.25px;font-weight:normal;letter-spacing:-0.04px;">Κωδικός στοιχηματικού</span>
<div class="abs" style="left:327px;top:89px;width:137px;height:28px;border-radius:14px;background:#2ba3ad;color:#fff;text-align:center;line-height:28px;font-size:11px;font-weight:bold;letter-spacing:0.03px;">ΦΟΡΤΩΣΗ</div>
<div class="abs" style="left:0;top:131px;width:480px;text-align:center;line-height:19px;color:#333;white-space:nowrap"><span style="font-size:15px;font-weight:normal;letter-spacing:0.05px;">Προσθέστε γεγονότα στο στοιχηματικό δελτίο ή πληκτρολογήστε</span><br><span style="font-size:15px;font-weight:normal;">κωδικό για φόρτωση γεγονότων</span></div>
<div class="abs" style="left:24px;top:179px;width:432px;height:38px;border-radius:19px;background:#2eb157;color:#fff;text-align:center;line-height:38px;font-size:13.5px;font-weight:bold;letter-spacing:0.08px;">ΕΓΓΡΑΦΗ</div><span class="abs" style="left:109.500px;top:229px;line-height:20px;color:#1f96a3;white-space:nowrap;font-size:12px;font-weight:normal;letter-spacing:0.07px;">ΠΩΣ ΝΑ ΤΟΠΟΘΕΤΗΣΕΤΕ ΕΝΑ ΣΤΟΙΧΗΜΑ</span>
<div class="abs" style="left:355.500px;top:231.500px;width:15.500px;height:15.500px;border-radius:7.750px;background:#0e8f9c;color:#fff;font-size:12.500px;font-weight:bold;text-align:center;line-height:16px">?</div></div>
<div class="card" style="left:1412px;top:370px;width:235px;height:96px">
<div class="img" style="background:linear-gradient(180deg,#4a1c12 0,#7a3a14 30%,#5a1418 60%,#8a1c1c 100%)">
<svg width="235" height="68" viewBox="0 0 235 68"><defs><filter id="bl1" x="-5%" y="-5%" width="110%" height="110%"><feGaussianBlur stdDeviation="0.900"/></filter><linearGradient id="rg1" x1="0" y1="0" x2="0" y2="1"><stop offset="0" stop-color="#2a0b08"/><stop offset="0.45" stop-color="#4a1512"/><stop offset="1" stop-color="#3a0f0e"/></linearGradient></defs><rect width="235" height="68" fill="url(#rg1)"/><g filter="url(#bl1)">
<path d="M0 0h58v10Q30 14 0 12z" fill="#4a2a0c"/><path d="M0 4q14-2 26 0M30 3q10 2 24-1M4 9q18 2 40-1" stroke="#e3b650" stroke-width="1.500" fill="none"/><path d="M2 6h8M20 7h6" stroke="#fff3c8" stroke-width="1.200"/><path d="M0 12q30 0 58-3v16H0z" fill="#4a1a12"/>
<path d="M52 0h40l-2 40H56z" fill="#4a250e"/><path d="M60 20h26l2 20H57z" fill="#8a4a14"/>
<path d="M125 0h110v6q-50 5-110-2z" fill="#7a2a0c"/><path d="M130 2q10 3 30-1M170 3q20 2 40-1" stroke="#e0901c" stroke-width="1.500" fill="none"/>
<path d="M88 0h14l42 40h-14z" fill="#c8921c"/><path d="M95 2l40 36" stroke="#f8e29a" stroke-width="2.500"/><path d="M100 12l30 26" stroke="#3a2208" stroke-width="2.500"/>
<path d="M0 31q28-5 56-4v7q-28-1-56 4z" fill="#b88a2a"/><path d="M140 30q50-2 95 10v7q-45-12-95-10z" fill="#b88a2a"/><path d="M142 31q48-1 93 11" stroke="#e6c46a" stroke-width="1.200" fill="none"/>
<path d="M0 39q28-5 56-4v33H0z" fill="#15100f"/><path d="M16 40l34-4 6 32H26z" fill="#d6201c"/>
<path d="M56 36h32v32H56z" fill="#9a4a12"/><path d="M58 46h28v22H58z" fill="#c02a14"/><path d="M60 50v18M65 50v18M70 50v18M75 50v18M80 50v18" stroke="#e8a23a" stroke-width="1.200"/>
<path d="M140 37q50-2 95 10v21H140z" fill="#15100f"/><path d="M143 38l28 1-14 22-10 2z" fill="#12a048"/><path d="M171 39l28 5-12 24h-32z" fill="#d6201c"/><path d="M222 52l13 4v12h-22z" fill="#d6201c"/>
<path d="M218 18l8-3 3 6-8 4z" fill="#e8d28a"/><path d="M213 32l16-6" stroke="#5a9a1c" stroke-width="1.500"/></g>
<g font-family="Liberation Sans, sans-serif" font-weight="bold" fill="#f3ece4"><text x="27" y="61" font-size="14" transform="rotate(-10 27 61)">12</text><text x="-1" y="64" font-size="13" transform="rotate(-16 -1 64)">28</text><text x="164" y="62" font-size="13" fill="#f0d8c8" transform="rotate(10 164 62)">32</text><text x="193" y="65" font-size="13" transform="rotate(13 193 65)">15</text></g></svg></div>
<div class="bump" style="left:86px"></div>
<div class="bar"><span style="font-size:12.75px;font-weight:bold;letter-spacing:0.07px;">ΡΟΥΛΕΤΑ</span></div>
<svg class="abs" style="left:103px;top:37px" width="30" height="30" viewBox="0 0 30 30"><circle cx="15" cy="15" r="13.500" fill="none" stroke="#d9f2e0" stroke-width="1.600" stroke-dasharray="1.500 1"/><circle cx="15" cy="15" r="11" fill="none" stroke="#d9f2e0" stroke-width="1"/><circle cx="15" cy="15" r="7.500" fill="none" stroke="#d9f2e0" stroke-width="1"/><path d="M15 10.500v9M10.500 15h9" stroke="#d9f2e0" stroke-width="1.400" stroke-linecap="round"/><circle cx="15" cy="15" r="1.500" fill="#d9f2e0"/></svg></div>
<div class="card" style="left:1657px;top:370px;width:235px;height:96px">
<div class="img">
<svg width="235" height="68" viewBox="0 0 235 68"><defs><filter id="bl2" x="-5%" y="-5%" width="110%" height="110%"><feGaussianBlur stdDeviation="0.800"/></filter><linearGradient id="sk1" x1="0" y1="0" x2="1" y2="1"><stop offset="0" stop-color="#c06a44"/><stop offset="0.5" stop-color="#cf7f58"/><stop offset="1" stop-color="#d9946e"/></linearGradient></defs><rect width="235" height="68" fill="#efefef"/><g filter="url(#bl2)">
<path d="M0 0h120L70 40v28H0z" fill="#14946c"/><path d="M200 0h35v40z" fill="#12805e"/><path d="M215 40l20 6v22h-12z" fill="#eadccd"/>
<path d="M68 38L118 0h90l27 46v22H98z" fill="#f6f6f6"/><path d="M68 38l8 8 50-40-8-6z" fill="#dcdad6"/>
<path d="M0 0h18q4 10 14 12L0 30z" fill="#c87450"/><path d="M28 0h62q4 14-8 26-22 6-40-4Q28 10 28 0z" fill="#b9623e"/><path d="M36 0h48q2 10-6 18-18 4-34-2-8-8-8-16z" fill="#c8724c"/>
<path d="M0 24q30-16 60 0 14 10 24 28l4 16H0z" fill="url(#sk1)"/><path d="M36 46q16-8 34 0 8 8 12 22H40z" fill="#e2a78c"/><path d="M10 30q-4 14 2 36" stroke="#b86844" stroke-width="1" fill="none"/>
<path d="M140 40l46-24 34 52" fill="none" stroke="#2f55b8" stroke-width="1.500"/>
<path d="M163 40q14-6 30 0-4 6-6 12 4 8 0 16h-36q4-6 8-8-6-2-8-8 4-8 12-12z" fill="#161616"/><path d="M150 60l8-4 2 8h-12z" fill="#161616"/>
<path d="M122 2q6-4 12 0 2 4-2 8l-4-2 1 4h-5l1-4q-5-1-3-6z" fill="#161616"/><path d="M148 18q6-4 12 0 2 5-3 8l-3-2 1 4h-5l1-4q-5-1-3-6z" fill="#161616"/>
<path d="M166 8q2 8 10 6 6-2 12-10" fill="none" stroke="#161616" stroke-width="2.600"/><path d="M184 2l10 6" stroke="#161616" stroke-width="2.200"/>
<path d="M200 58l10 2 6 8h-12z" fill="#d62430"/></g></svg></div>
<div class="bump" style="left:86px"></div>
<div class="bar"><span style="font-size:12.75px;font-weight:bold;letter-spacing:0.03px;">ΜΠΛΑΚΤΖΑΚ</span></div>
<svg class="abs" style="left:106px;top:40px" width="24" height="28" viewBox="0 0 24 28"><rect x="6" y="1" width="16" height="22" rx="2.500" fill="none" stroke="#d9f2e0" stroke-width="1.300"/><rect x="2" y="4.500" width="16" height="22" rx="2.500" fill="#2eb157" stroke="#d9f2e0" stroke-width="1.300"/><path d="M10 18.500l-2.700-2.700a1.700 1.700 0 0 1 2.700-2 1.700 1.700 0 0 1 2.700 2z" fill="none" stroke="#d9f2e0" stroke-width="1.100"/><circle cx="5.500" cy="8.500" r="1" fill="#d9f2e0"/><circle cx="14.500" cy="22.500" r="1" fill="#d9f2e0"/></svg></div>
<div class="card" style="left:1412px;top:477px;width:480px;height:96px">
<div class="img">
<svg width="480" height="68" viewBox="0 0 480 68"><defs><filter id="bl3" x="-5%" y="-5%" width="110%" height="110%"><feGaussianBlur stdDeviation="0.900"/></filter><linearGradient id="dr1" x1="0" y1="0" x2="1" y2="0"><stop offset="0" stop-color="#a47a5e"/><stop offset="0.25" stop-color="#c19a7c"/><stop offset="0.5" stop-color="#a57a5c"/><stop offset="0.75" stop-color="#b98f70"/><stop offset="1" stop-color="#9a7056"/></linearGradient></defs><rect width="480" height="68" fill="#4f4548"/><g filter="url(#bl3)">
<path d="M30 0h222q14 6 20 26t16 42H8Q22 30 30 0z" fill="url(#dr1)"/><path d="M0 0h32Q24 30 8 68H0z" fill="#453a3a"/>
<path d="M60 0h22l-14 68H46z" fill="#caa487" opacity="0.700"/><path d="M96 0h14l6 68H92z" fill="#8e674e" opacity="0.600"/><path d="M186 0h30l26 68h-34z" fill="#c8a184" opacity="0.550"/>
<path d="M143 0h22l-3 68h-18z" fill="#56575b"/><path d="M158 0h6l-2 68h-5z" fill="#868a8e"/>
<path d="M290 68q6-22 36-28l26 4 24-6q30 6 36 30z" fill="#27272a"/><path d="M322 68l8-24h22l8 24z" fill="#f1f1f1"/><path d="M336 50l6 8 6-8 2 18h-16z" fill="#27272a"/>
<path d="M314 0h62q6 18-2 32-6 18-28 22-22-4-28-24-8-14-4-30z" fill="#d2703c"/><path d="M322 4q10 14 4 30" stroke="#e89660" stroke-width="5" fill="none" opacity="0.600"/>
<path d="M312 0h66l-1 7q-32-5-64 2z" fill="#5e2412"/><path d="M370 0h8q4 12-2 24z" fill="#5e2412"/>
<path d="M322 8h18v3.500h-18zM350 8h18v3.500h-18z" fill="#2a1a14"/><path d="M325 13h10v3h-10zM353 13h10v3h-10z" fill="#d8dcd0"/>
<path d="M326 27q20-8 40 0 4 16-6 24-14 6-28 0-10-8-6-24z" fill="#4e2c1a"/><path d="M332 31q14-4 28 0-2 9-14 9t-14-9z" fill="#e0714e"/><path d="M338 44q8-2 16 0-2 8-8 8t-8-8z" fill="#6a3a20"/>
<path d="M357 28l12 7-1.500 2.500-12-7z" fill="#f4f4f4"/><path d="M372 26q10-4 18 0M378 20q8-6 14-6" stroke="#8a8487" stroke-width="1" fill="none"/></g></svg></div>
<div class="bump" style="left:208px"></div>
<div class="bar"><span style="font-size:12.75px;font-weight:bold;letter-spacing:0.03px;">ΚΟΥΛΟΧΕΡΗΔΕΣ</span></div>
<svg class="abs" style="left:225px;top:40px" width="30" height="26" viewBox="0 0 30 26"><path d="M7 1h16l6 7.500L15 25 1 8.500z" fill="none" stroke="#d9f2e0" stroke-width="1.300" stroke-linejoin="round"/><path d="M1 8.500h28M7 1l4 7.500 4-7.500 4 7.500 4-7.500M11 8.500L15 25l4-16.500" fill="none" stroke="#d9f2e0" stroke-width="1.100" stroke-linejoin="round"/></svg></div>
<div class="abs" style="left:1412px;top:583px;width:480px;height:43px;background:#ef4b45;border-radius:4px 4px 0 0;color:#fff;text-align:center;line-height:45px;font-size:12.75px;font-weight:bold;letter-spacing:-0.03px;">ΚΥΡΙΑ ΓΕΓΟΝΟΤΑ</div>
<div class="abs" style="left:1412px;top:626px;width:480px;height:312px;background:#fff;overflow:hidden;border-radius:0 0 5px 5px">
<div class="abs" style="left:0;top:0px;width:480px;height:186px">
<div class="abs" style="left:0;top:14.500px;width:480px;text-align:center;line-height:20px;color:#3d4254;white-space:nowrap;font-size:12.25px;font-weight:normal;letter-spacing:-0.06px;">ΠΟΔΟΣΦΑΙΡΟ. ΠΡΟΚΡΙΣΗ ΣΤΟ ΠΑΓΚΟΣΜΙΟ ΚΥΠΕΛΛΟ 2026. ΕΥΡΩΠΗ</div>
<div class="abs" style="left:91px;top:49px"><svg width="42" height="43" viewBox="-1 -1 42 43"><defs><clipPath id="e1ac"><circle cx="20" cy="20" r="19.500"/></clipPath><radialGradient id="e1ag" cx="50%" cy="18%" r="80%"><stop offset="0" stop-color="#fff" stop-opacity="0.800"/><stop offset="0.4" stop-color="#fff" stop-opacity="0.150"/><stop offset="0.75" stop-color="#000" stop-opacity="0.050"/><stop offset="1" stop-color="#000" stop-opacity="0.380"/></radialGradient></defs><ellipse cx="20" cy="22" rx="19" ry="19.500" fill="#000" opacity="0.220"/><g clip-path="url(#e1ac)"><rect width="40" height="40" fill="#f6f6f6"/><rect x="17" width="6" height="40" fill="#d01c2a"/><rect y="17" width="40" height="6" fill="#d01c2a"/><rect width="40" height="40" fill="url(#e1ag)"/></g></svg></div>
<div class="abs" style="left:347px;top:49px"><svg width="42" height="43" viewBox="-1 -1 42 43"><defs><clipPath id="e1bc"><circle cx="20" cy="20" r="19.500"/></clipPath><radialGradient id="e1bg" cx="50%" cy="18%" r="80%"><stop offset="0" stop-color="#fff" stop-opacity="0.800"/><stop offset="0.4" stop-color="#fff" stop-opacity="0.150"/><stop offset="0.75" stop-color="#000" stop-opacity="0.050"/><stop offset="1" stop-color="#000" stop-opacity="0.380"/></radialGradient></defs><ellipse cx="20" cy="22" rx="19" ry="19.500" fill="#000" opacity="0.220"/><g clip-path="url(#e1bc)"><rect width="40" height="14" fill="#d22030"/><rect y="14" width="40" height="13" fill="#1a3590"/><rect y="27" width="40" height="13" fill="#f4f4f4"/><path d="M12.500 5.500q3.500-2.500 7 0l-1 3.500h-5z" fill="#e9c54f"/><path d="M9.500 12l3.500 2 3-3.500 3 3.500 3.500-2-1 9-2 5-3.500 4-3.500-4-2-5z" fill="#f3f3f3"/><path d="M13.500 14h5v7q-2.500 3-5 0z" fill="#c8202e"/><path d="M16 14v9M13.500 18h5" stroke="#f3f3f3" stroke-width="0.800"/><rect width="40" height="40" fill="url(#e1bg)"/></g></svg></div>
<div class="abs" style="left:200px;top:48px;width:80px;text-align:center;line-height:18px;color:#a0a3ab;font-size:14px">13.11<br>21:45</div>
<div class="abs" style="left:52px;top:102px;width:120px;text-align:center;line-height:20px;color:#9da0a8;white-space:nowrap;font-size:12.25px;font-weight:normal;letter-spacing:-0.05px;">ΑΓΓΛΙΑ</div>
<div class="abs" style="left:308px;top:102px;width:120px;text-align:center;line-height:20px;color:#9da0a8;white-space:nowrap;font-size:12px;font-weight:normal;letter-spacing:-0.30px;">ΣΕΡΒΙΑ</div>
<div class="abs" style="left:24px;top:130px;width:432px;height:29px;border-radius:14.500px;background:#eeeeee"><span class="abs" style="left:41px;top:1px;width:80px;text-align:center;line-height:29px;color:#555a66;font-size:13.500px">1.27</span><span class="abs" style="left:310px;top:1px;width:80px;text-align:center;line-height:29px;color:#555a66;font-size:13.500px">11</span>
<div class="abs" style="left:162px;top:0;width:108px;height:29px;border-radius:14.500px;background:#2eb157;color:#fff;text-align:center;line-height:30px;font-size:11.25px;font-weight:bold;letter-spacing:0.03px;">ΣΤΟΙΧΗΜΑΤΙΣΤΕ</div></div></div>
<div class="abs" style="left:0;top:184px;width:480px;height:1px;background:#efefef"></div>
<div class="abs" style="left:0;top:185px;width:480px;height:186px">
<div class="abs" style="left:0;top:14.500px;width:480px;text-align:center;line-height:20px;color:#3d4254;white-space:nowrap;font-size:12.25px;font-weight:normal;letter-spacing:-0.06px;">ΠΟΔΟΣΦΑΙΡΟ. ΠΡΟΚΡΙΣΗ ΣΤΟ ΠΑΓΚΟΣΜΙΟ ΚΥΠΕΛΛΟ 2026. ΕΥΡΩΠΗ</div>
<div class="abs" style="left:91px;top:49px"><svg width="42" height="43" viewBox="-1 -1 42 43"><defs><clipPath id="e2ac"><circle cx="20" cy="20" r="19.500"/></clipPath><radialGradient id="e2ag" cx="50%" cy="18%" r="80%"><stop offset="0" stop-color="#fff" stop-opacity="0.800"/><stop offset="0.4" stop-color="#fff" stop-opacity="0.150"/><stop offset="0.75" stop-color="#000" stop-opacity="0.050"/><stop offset="1" stop-color="#000" stop-opacity="0.380"/></radialGradient></defs><ellipse cx="20" cy="22" rx="19" ry="19.500" fill="#000" opacity="0.220"/><g clip-path="url(#e2ac)"><rect width="14" height="40" fill="#1426a8"/><rect x="14" width="13" height="40" fill="#f6f6f6"/><rect x="27" width="13" height="40" fill="#e0161c"/><rect width="40" height="40" fill="url(#e2ag)"/></g></svg></div>
<div class="abs" style="left:347px;top:49px"><svg width="42" height="43" viewBox="-1 -1 42 43"><defs><clipPath id="e2bc"><circle cx="20" cy="20" r="19.500"/></clipPath><radialGradient id="e2bg" cx="50%" cy="18%" r="80%"><stop offset="0" stop-color="#fff" stop-opacity="0.800"/><stop offset="0.4" stop-color="#fff" stop-opacity="0.150"/><stop offset="0.75" stop-color="#000" stop-opacity="0.050"/><stop offset="1" stop-color="#000" stop-opacity="0.380"/></radialGradient></defs><ellipse cx="20" cy="22" rx="19" ry="19.500" fill="#000" opacity="0.220"/><g clip-path="url(#e2bc)"><rect width="40" height="20" fill="#3a8ee0"/><rect y="20" width="40" height="20" fill="#f7d514"/><rect width="40" height="40" fill="url(#e2bg)"/></g></svg></div>
<div class="abs" style="left:200px;top:48px;width:80px;text-align:center;line-height:18px;color:#a0a3ab;font-size:14px">13.11<br>21:45</div>
<div class="abs" style="left:52px;top:102px;width:120px;text-align:center;line-height:20px;color:#9da0a8;white-space:nowrap;font-size:12px;font-weight:normal;letter-spacing:-0.15px;">ΓΑΛΛΙΑ</div>
<div class="abs" style="left:308px;top:102px;width:120px;text-align:center;line-height:20px;color:#9da0a8;white-space:nowrap;font-size:12px;font-weight:normal;">ΟΥΚΡΑΝΙΑ</div></div></div>
<div class="abs" style="left:1812px;top:822px;width:60px;height:60px;border-radius:30px;background:#299e40;box-shadow:0 4px 14px rgba(0,0,0,0.200)"></div><svg class="abs" style="left:1825.500px;top:836px" width="34" height="30.700" viewBox="0 0 31 28"><path d="M16 1c8 0 14 5 14 11.500S24 24 16 24c-2 0-4-.3-5.600-.9L2 26.500l2.500-6.300C2.900 18.100 2 15.900 2 12.500 2 6 8 1 16 1z" fill="#fff"/></svg>
</body></html>
